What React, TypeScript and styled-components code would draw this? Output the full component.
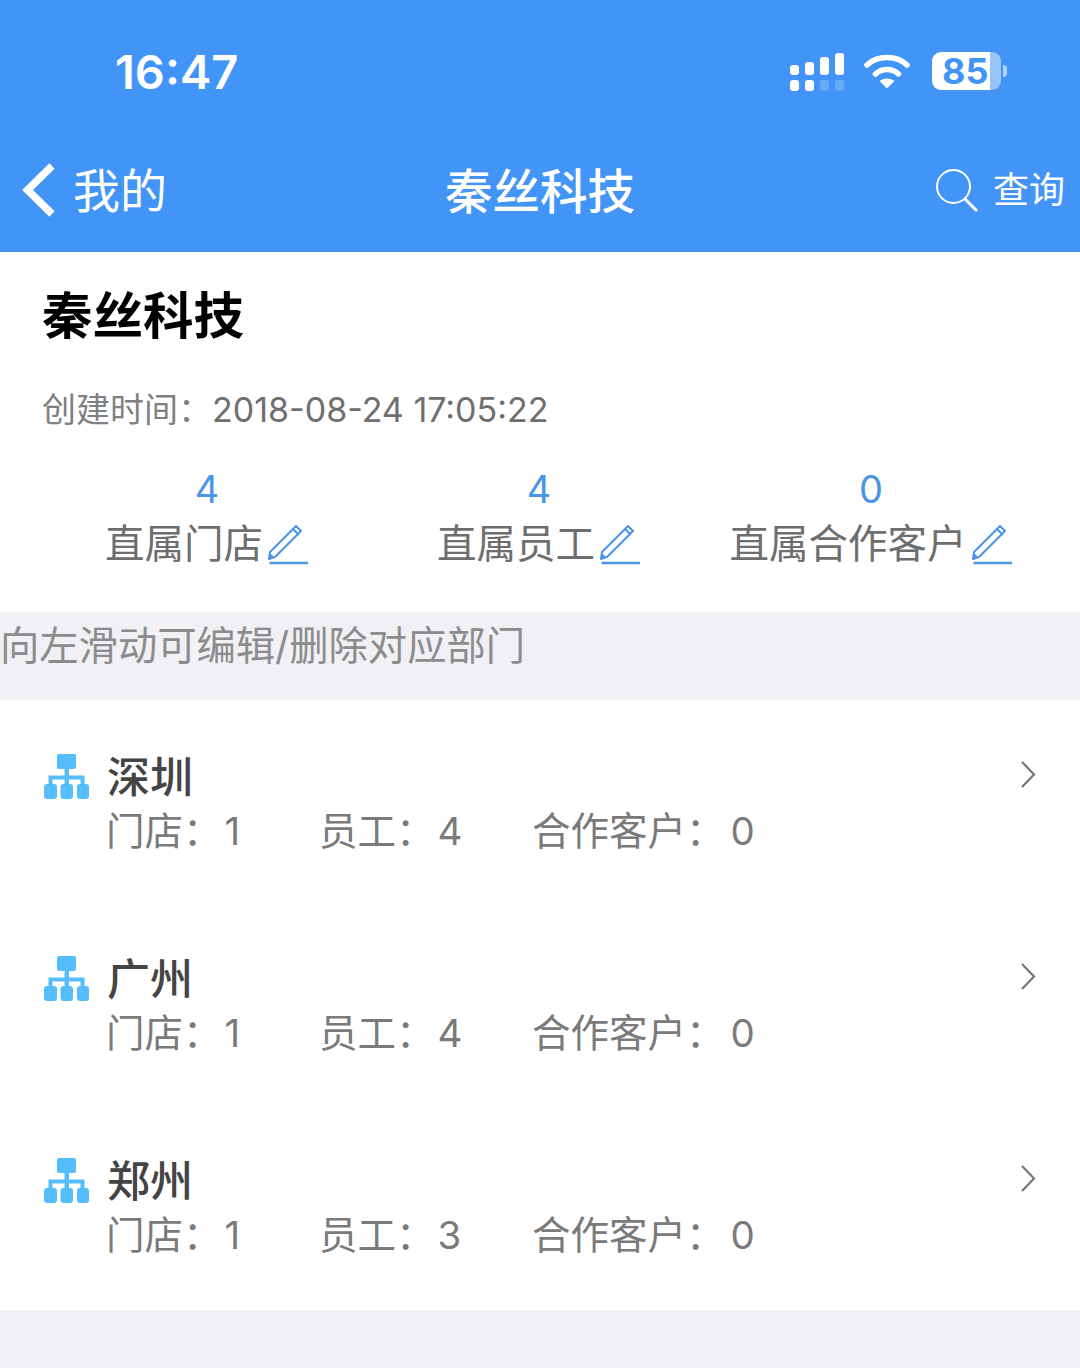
import React from "react";
import styled, { createGlobalStyle } from "styled-components";

const FONT = `Inter, "Noto Sans CJK SC", sans-serif`;

const GlobalStyle = createGlobalStyle`
  html, body {
    margin: 0;
    padding: 0;
    background: #f0f0f5;
    font-family: ${FONT};
  }
`;

const departments = [
  { name: "深圳", stores: 1, staff: 4, customers: 0 },
  { name: "广州", stores: 1, staff: 4, customers: 0 },
  { name: "郑州", stores: 1, staff: 3, customers: 0 },
];

const stats = [
  { value: 4, label: "直属门店" },
  { value: 4, label: "直属员工" },
  { value: 0, label: "直属合作客户" },
];

function SignalIcon() {
  return (
    <svg width="54" height="40" viewBox="0 0 54 40">
      <g fill="#fff">
        <rect x="0" y="14" width="9" height="10" rx="3" />
        <rect x="15" y="11" width="9" height="13" rx="3" />
        <rect x="30" y="6" width="9" height="18" rx="3" />
        <rect x="45" y="2" width="9" height="22" rx="3" />
        <rect x="0" y="29" width="9" height="11" rx="3" />
        <rect x="15" y="29" width="9" height="11" rx="3" />
        <rect x="30" y="29" width="9" height="11" rx="3" opacity="0.2" />
        <rect x="45" y="29" width="9" height="11" rx="3" opacity="0.2" />
      </g>
    </svg>
  );
}

function WifiIcon() {
  return (
    <svg width="48" height="38" viewBox="0 0 48 38">
      <g fill="none" stroke="#fff" strokeWidth="5.5" strokeLinecap="round">
        <path d="M3 13 C13 3 33 3 43 13" />
        <path d="M11.5 22 C18 16 28 16 34.5 22" />
      </g>
      <path d="M15.5 29 C19.5 25.5 26.5 25.5 30.5 29 L23 36.5 Z" fill="#fff" />
    </svg>
  );
}

function BatteryIcon() {
  return (
    <BatteryWrap>
      <BatteryBody>
        <BatteryText>85</BatteryText>
      </BatteryBody>
      <BatteryCap />
    </BatteryWrap>
  );
}

function BackIcon() {
  return (
    <svg width="36" height="56" viewBox="0 0 36 56">
      <path d="M32 4 L7.5 28 L32 52" fill="none" stroke="#fff" strokeWidth="7.5" />
    </svg>
  );
}

function SearchIcon() {
  return (
    <svg width="44" height="44" viewBox="0 0 44 44">
      <circle cx="18.5" cy="18.5" r="16.5" fill="none" stroke="#fff" strokeWidth="2" />
      <path d="M30 31 L41 42" fill="none" stroke="#fff" strokeWidth="3" strokeLinecap="round" />
    </svg>
  );
}

function PencilIcon() {
  return (
    <svg width="42" height="42" viewBox="0 0 42 42">
      <g fill="none" stroke="#4a95e6" strokeLinejoin="round">
        <path d="M3 29 L29 3 L34 8 L8 34 L2 36 Z" strokeWidth="2" />
        <path d="M26 6 L31 11" strokeWidth="2" />
        <path d="M2.5 40 L41 40" strokeWidth="2.5" />
      </g>
      <path d="M3 30 L7 34 L2 36 Z" fill="#4a95e6" />
    </svg>
  );
}

function TreeIcon() {
  return (
    <svg width="45" height="46" viewBox="0 0 45 46">
      <g fill="#56bdfb">
        <rect x="13" y="0" width="19" height="15" rx="2" />
        <rect x="0" y="30" width="13" height="15" rx="3" />
        <rect x="16.5" y="30" width="12.5" height="15" rx="3" />
        <rect x="33" y="30" width="12" height="15" rx="3" />
        <rect x="20.5" y="14" width="4.5" height="17" />
        <path d="M4.5 31 V21.5 H40.5 V31 H36.5 V25.5 H8.5 V31 Z" />
      </g>
    </svg>
  );
}

function ChevronIcon() {
  return (
    <svg width="18" height="30" viewBox="0 0 18 30">
      <path d="M3 2 L15 14.5 L3 27" fill="none" stroke="#777" strokeWidth="2.2" />
    </svg>
  );
}

export default function App() {
  return (
    <Page>
      <GlobalStyle />
      <Header>
        <StatusBar>
          <Clock>16:47</Clock>
          <StatusIcons>
            <SignalIcon />
            <WifiIcon />
            <BatteryIcon />
          </StatusIcons>
        </StatusBar>
        <NavBar>
          <BackButton>
            <BackIcon />
            <BackLabel>我的</BackLabel>
          </BackButton>
          <NavTitle>秦丝科技</NavTitle>
          <SearchButton>
            <SearchIcon />
            <SearchLabel>查询</SearchLabel>
          </SearchButton>
        </NavBar>
      </Header>

      <Summary>
        <CompanyName>秦丝科技</CompanyName>
        <CreatedAt>
          创建时间：<CreatedValue>2018-08-24 17:05:22</CreatedValue>
        </CreatedAt>
        <StatsRow>
          {stats.map((stat) => (
            <StatCell key={stat.label}>
              <StatValue>{stat.value}</StatValue>
              <StatLabel>
                {stat.label}
                <PencilIcon />
              </StatLabel>
            </StatCell>
          ))}
        </StatsRow>
      </Summary>

      <HintBar>向左滑动可编辑/删除对应部门</HintBar>

      <DepartmentList>
        {departments.map((dep) => (
          <DepartmentRow key={dep.name}>
            <NameLine>
              <TreeIcon />
              <DepartmentName>{dep.name}</DepartmentName>
            </NameLine>
            <CountLine>
              <Count $width={213}>
                门店：<CountValue>{dep.stores}</CountValue>
              </Count>
              <Count $width={213}>
                员工：<CountValue>{dep.staff}</CountValue>
              </Count>
              <Count>
                合作客户：<CountValue $gap={6}>{dep.customers}</CountValue>
              </Count>
            </CountLine>
            <ChevronSlot>
              <ChevronIcon />
            </ChevronSlot>
          </DepartmentRow>
        ))}
      </DepartmentList>
    </Page>
  );
}

const Page = styled.div`
  width: 1080px;
  height: 1368px;
  overflow: hidden;
  background: #f0f0f5;
`;

const Header = styled.header`
  height: 252px;
  background: #4295f7;
  color: #fff;
  display: flex;
  flex-direction: column;
`;

const StatusBar = styled.div`
  height: 130px;
  padding: 12px 73px 0 115px;
  box-sizing: border-box;
  display: flex;
  align-items: center;
  justify-content: space-between;
`;

const Clock = styled.div`
  font-size: 47px;
  font-weight: 600;
  line-height: 1;
`;

const StatusIcons = styled.div`
  display: flex;
  align-items: center;
  gap: 20px;
`;

const BatteryWrap = styled.div`
  display: flex;
  align-items: center;
  gap: 2px;
`;

const BatteryBody = styled.div`
  width: 69px;
  height: 38px;
  border-radius: 9px;
  box-sizing: border-box;
  padding-left: 10px;
  background: linear-gradient(to right, #fff 84%, rgba(255, 255, 255, 0.45) 84%);
  display: flex;
  align-items: center;
`;

const BatteryText = styled.span`
  font-size: 36px;
  font-weight: 700;
  color: #4295f7;
  line-height: 1;
`;

const BatteryCap = styled.div`
  width: 4px;
  height: 12px;
  border-radius: 0 6px 6px 0;
  background: rgba(255, 255, 255, 0.6);
`;

const NavBar = styled.div`
  position: relative;
  height: 122px;
  display: flex;
  align-items: center;
  justify-content: space-between;
  padding: 0 15px 2px 20px;
  box-sizing: border-box;
`;

const BackButton = styled.div`
  display: flex;
  align-items: center;
  gap: 17px;
`;

const BackLabel = styled.span`
  font-size: 47px;
  line-height: 1;
`;

const NavTitle = styled.div`
  position: absolute;
  left: 0;
  right: 0;
  padding-top: 3px;
  text-align: center;
  font-size: 47.5px;
  font-weight: 500;
  line-height: 1;
`;

const SearchButton = styled.div`
  display: flex;
  align-items: center;
  gap: 14px;
`;

const SearchLabel = styled.span`
  font-size: 36px;
  line-height: 1;
`;

const Summary = styled.section`
  height: 360px;
  background: #fff;
  box-sizing: border-box;
  padding-top: 34px;
`;

const CompanyName = styled.h1`
  margin: 0;
  padding-left: 42px;
  font-size: 50.5px;
  font-weight: 700;
  line-height: 60px;
  color: #000;
`;

const CreatedAt = styled.div`
  margin-top: 44px;
  padding-left: 42px;
  font-size: 34px;
  line-height: 40px;
  color: #808080;
`;

const CreatedValue = styled.span`
  color: #6f6f6f;
`;

const StatsRow = styled.div`
  margin-top: 37px;
  padding: 0 42px 0 41px;
  display: grid;
  grid-template-columns: repeat(3, 332px);
`;

const StatCell = styled.div`
  display: flex;
  flex-direction: column;
  align-items: center;
`;

const StatValue = styled.div`
  font-size: 38px;
  line-height: 44px;
  color: #4a95e6;
`;

const StatLabel = styled.div`
  margin-top: 8px;
  display: flex;
  align-items: center;
  gap: 4px;
  font-size: 39.5px;
  line-height: 50px;
  color: #6e6e6e;
  white-space: nowrap;
`;

const HintBar = styled.div`
  height: 88px;
  box-sizing: border-box;
  background: #f0f0f5;
  padding: 10px 0 0 0;
  font-size: 39.3px;
  line-height: 48px;
  color: #8c8c8c;
  white-space: nowrap;
`;

const DepartmentList = styled.div`
  height: 610px;
  background: #fff;
  display: flex;
  flex-direction: column;
`;

const DepartmentRow = styled.div`
  position: relative;
  height: 202px;
  padding: 50px 0 0 44px;
  box-sizing: border-box;
`;

const NameLine = styled.div`
  display: flex;
  align-items: center;
  gap: 18px;
  height: 54px;
`;

const DepartmentName = styled.span`
  font-size: 43px;
  line-height: 54px;
  font-weight: 500;
  color: #444;
`;

const CountLine = styled.div`
  margin-top: 2px;
  padding-left: 62px;
  display: flex;
  font-size: 38.5px;
  line-height: 50px;
  color: #7a7a7a;
  white-space: nowrap;
`;

const Count = styled.span<{ $width?: number }>`
  width: ${(p) => (p.$width ? `${p.$width}px` : "auto")};
`;

const CountValue = styled.span<{ $gap?: number }>`
  margin-left: ${(p) => p.$gap ?? 3}px;
`;

const ChevronSlot = styled.div`
  position: absolute;
  right: 43px;
  top: 60px;
`;
